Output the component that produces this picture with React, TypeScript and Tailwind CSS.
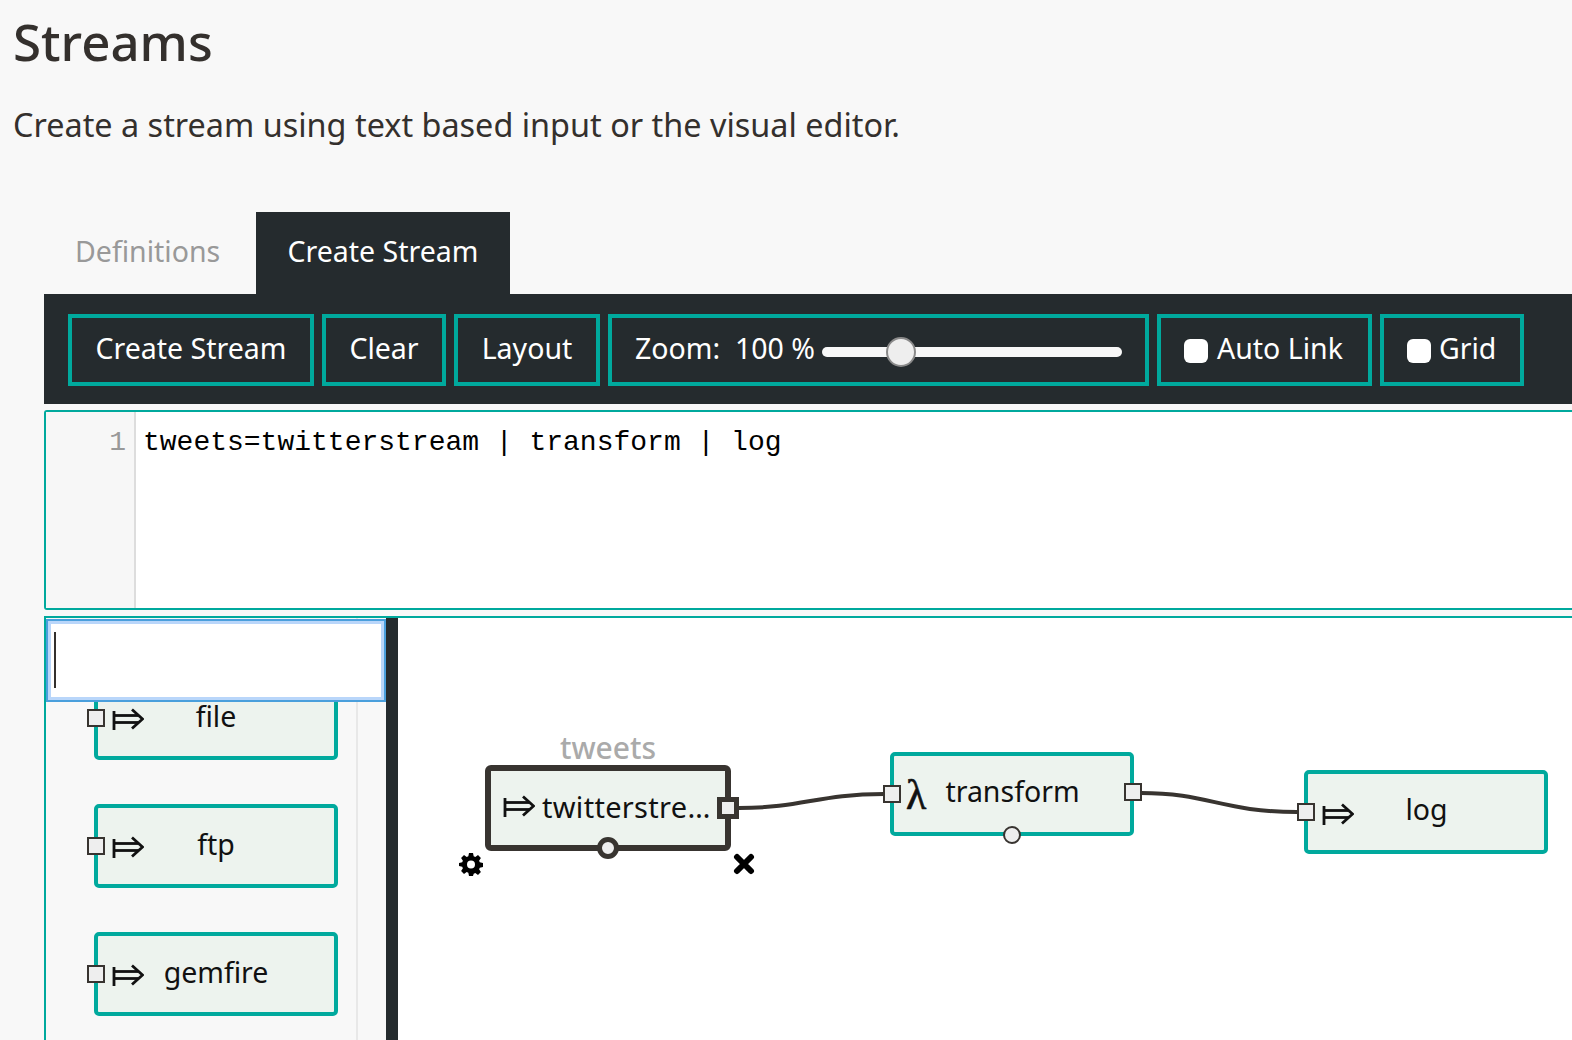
import React from "react";

const sans = "font-['Noto_Sans','Open_Sans',sans-serif]";

function Arrow({ className = "" }: { className?: string }) {
  return (
    <svg viewBox="0 0 32 22" width="32" height="22" fill="none" stroke="#111" strokeWidth="2.8" className={className}>
      <path d="M2 3v19" />
      <path d="M2 7.500h24" />
      <path d="M2 14.500h24" />
      <path d="M20 1.500 30.500 11 20 20.500" strokeLinejoin="miter" />
    </svg>
  );
}

function Port({ className = "" }: { className?: string }) {
  return <span className={`absolute h-[18px] w-[18px] border-2 border-[#383430] bg-[#eeeeee] ${className}`} />;
}

function PaletteNode({ label }: { label: string }) {
  return (
    <div className="relative flex h-[84px] w-[244px] shrink-0 items-center justify-center rounded-[5px] border-4 border-[#00a99d] bg-[#edf3ee] pb-[4px] text-[28.500px] leading-none text-[#111]">
      <Port className="-left-[11px] top-[29px]" />
      <Arrow className="absolute left-[14px] top-[28px]" />
      {label}
    </div>
  );
}

function Btn({ className, children }: { className: string; children: React.ReactNode }) {
  return (
    <div className={`flex h-[72px] shrink-0 items-center border-4 border-[#00a99d] pb-[4px] text-[28.500px] leading-none text-white ${className}`}>
      {children}
    </div>
  );
}

export default function App() {
  return (
    <div className={`h-[1040px] w-[1572px] overflow-hidden bg-[#f8f8f8] text-[#34302d] ${sans}`}>
      <h1 className="ml-[13px] h-[86px] pt-[6px] text-[51px] leading-[70px] font-medium">Streams</h1>
      <p className="ml-[13px] mt-[16px] h-[44px] text-[32.400px] leading-[44px]">
        Create a stream using text based input or the visual editor.
      </p>
      <div className="ml-[44px] mt-[66px] w-[1528px]">
        <div className="flex h-[82px] text-[28.500px]">
          <div className="flex w-[212px] items-center pb-[3px] pl-[31px] text-[#999999]">Definitions</div>
          <div className="flex w-[254px] items-center justify-center bg-[#252b2e] pb-[3px] text-white">Create Stream</div>
        </div>
        <div className="flex h-[110px] items-start gap-2 bg-[#252b2e] pl-6 pt-[20px]">
          <Btn className="w-[246px] justify-center">Create Stream</Btn>
          <Btn className="w-[124px] justify-center">Clear</Btn>
          <Btn className="w-[146px] justify-center">Layout</Btn>
          <Btn className="w-[541px] pl-[23px]">
            <span className="whitespace-pre">Zoom:  100 %</span>
            <div className="relative top-[4px] ml-[7px] h-[10px] w-[300px] rounded-[5px] bg-[#f8f8f8]">
              <span className="absolute -top-[10px] left-[64px] h-[30px] w-[30px] rounded-full border-2 border-[#8a8a8a] bg-[#eeeeee]" />
            </div>
          </Btn>
          <Btn className="w-[215px] pl-[23px]">
            <span className="relative top-[3px] mr-[9px] h-[24px] w-[24px] rounded-[6px] bg-white" />
            Auto Link
          </Btn>
          <Btn className="w-[144px] pl-[23px]">
            <span className="relative top-[3px] mr-[8px] h-[24px] w-[24px] rounded-[6px] bg-white" />
            Grid
          </Btn>
        </div>
        <div className="mt-[6px] flex h-[200px] w-[1540px] rounded-l-[3px] border-2 border-[#00a99d] bg-white">
          <div className="w-[90px] border-r-2 border-[#dddddd] bg-[#f7f7f7] pr-[8px] pt-[13px] text-right font-['Liberation_Mono',monospace] text-[28px] leading-[36px] text-[#999999]">
            1
          </div>
          <div className="pl-[7px] pt-[13px] font-['Liberation_Mono',monospace] text-[28px] leading-[36px] whitespace-pre text-black">
            tweets=twitterstream | transform | log
          </div>
        </div>
        <div className="mt-[6px] flex h-[424px] w-[1540px] border-t-2 border-[#00a99d]">
          <div className="relative w-[342px] shrink-0 overflow-hidden border-l-2 border-[#00a99d] bg-[#f8f8f8]">
            <div className="flex h-full w-[312px] flex-col gap-[44px] border-r-2 border-[#e8e8e8] pl-[48px] pt-[58px]">
              <PaletteNode label="file" />
              <PaletteNode label="ftp" />
              <PaletteNode label="gemfire" />
            </div>
            <div className="absolute left-0 right-0 top-px h-[83px] border-2 border-[#4a9fdc] bg-white shadow-[inset_0_0_0_3px_#b9d6fa]">
              <span className="absolute left-[6px] top-[11px] h-[56px] w-[2px] bg-[#34302d]" />
            </div>
          </div>
          <div className="w-[12px] shrink-0 bg-[#252b2e]" />
          <div className="relative flex-1 bg-white text-[28.500px] leading-none text-[#111]">
            <svg className="absolute inset-0" width="1174" height="422" fill="none" stroke="#383430" strokeWidth="4">
              <path d="M341 190C405 190 420 176 486 176" />
              <path d="M743 175C810 175 825 194 899 194" />
            </svg>

            <div className="absolute left-[87px] top-[147px] flex h-[86px] w-[246px] items-center rounded-[6px] border-[6px] border-[#383430] bg-[#edf3ee] pb-[4px] pl-[12px]">
              <div className="absolute -top-[39px] left-0 right-0 text-center text-[30px] leading-[32px] font-medium text-[#aaaaaa]">tweets</div>
              <Arrow className="mr-[7px] shrink-0" />
              <span className="whitespace-nowrap text-[29px] tracking-[0.3px]">twitterstre<span className="tracking-[1.500px]">…</span></span>
              <span className="absolute -right-[14px] top-[26px] h-[22px] w-[22px] border-[5px] border-[#383430] bg-[#eeeeee]" />
              <span className="absolute -bottom-[14px] left-[106px] h-[22px] w-[22px] rounded-full border-[5px] border-[#383430] bg-[#eeeeee]" />
              <svg viewBox="0 0 24 24" width="24" height="24" fill="#000" className="absolute -bottom-[31px] -left-[32px]">
                <path fillRule="evenodd" d="M10 1h4l.7 3.200 1.600.7L19 3.100l2.900 2.900-1.800 2.700.7 1.600L24 11v4l-3.200.7-.7 1.600 1.800 2.700-2.900 2.900-2.700-1.800-1.600.7L14 24h-4l-.7-3.200-1.600-.7L5 21.900 2.100 19l1.800-2.700-.7-1.600L0 14v-3l3.200-.7.7-1.600L2.100 6 5 3.100l2.700 1.800 1.600-.7L10 1Zm2 7.500a4 4 0 1 0 0 8 4 4 0 0 0 0-8Z" />
              </svg>
              <svg viewBox="0 0 22 22" width="22" height="22" stroke="#000" strokeWidth="6" strokeLinecap="round" className="absolute -bottom-[30px] -right-[30px]">
                <path d="M4 4l14 14M18 4 4 18" />
              </svg>
            </div>

            <div className="absolute left-[492px] top-[134px] flex h-[84px] w-[244px] items-center justify-center rounded-[5px] border-4 border-[#00a99d] bg-[#edf3ee] pb-[5px] pl-[1px]">
              <Port className="-left-[11px] top-[29px]" />
              <span className="absolute left-[12px] top-[18px] font-['Liberation_Serif',serif] text-[42px] leading-[42px] font-medium [-webkit-text-stroke:0.6px_#111]">λ</span>
              transform
              <Port className="-right-[12px] top-[27px]" />
              <span className="absolute -bottom-[12px] left-[109px] h-[18px] w-[18px] rounded-full border-2 border-[#383430] bg-[#eeeeee]" />
            </div>

            <div className="absolute left-[906px] top-[152px] flex h-[84px] w-[244px] items-center justify-center rounded-[5px] border-4 border-[#00a99d] bg-[#edf3ee] pb-[5px] pl-[1px]">
              <Port className="-left-[11px] top-[29px]" />
              <Arrow className="absolute left-[14px] top-[29px]" />
              log
            </div>
          </div>
        </div>
      </div>
    </div>
  );
}
